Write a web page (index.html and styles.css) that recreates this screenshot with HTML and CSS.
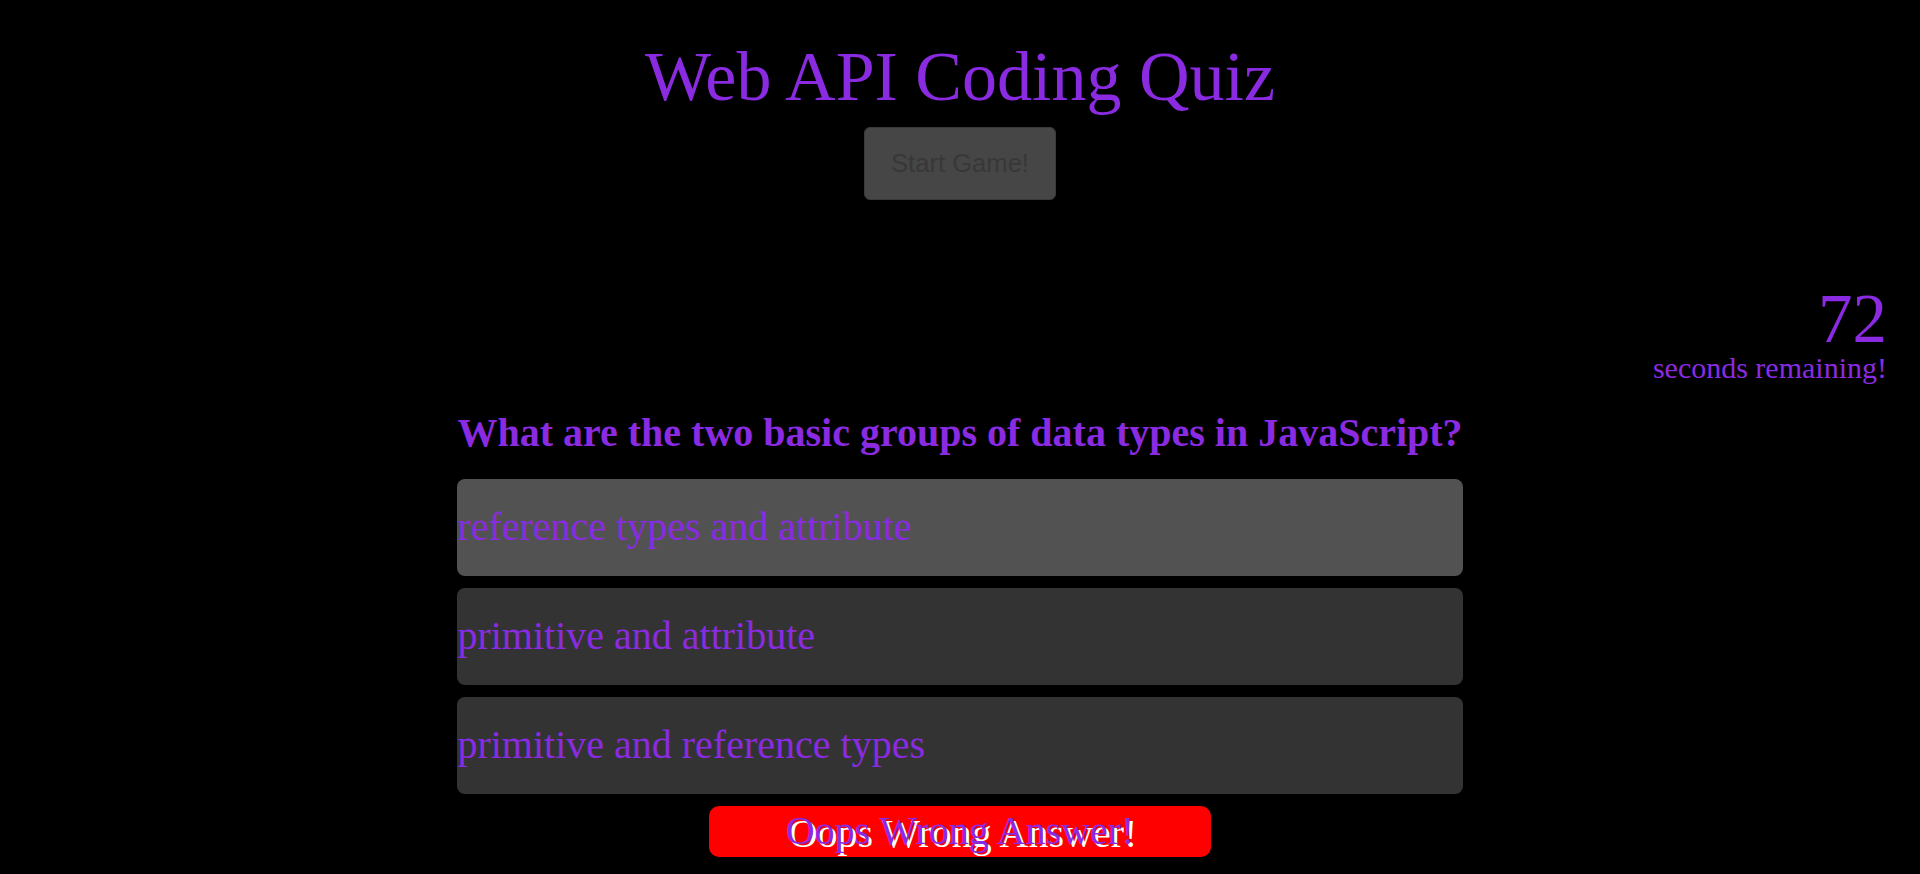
FILE: index.html
```html
<!DOCTYPE html>
<html lang="en">
<head>
<meta charset="UTF-8">
<title>Web API Coding Quiz</title>
<link rel="stylesheet" href="styles.css">
</head>
<body>
  <header class="header">
    <h1 class="title">Web API Coding Quiz</h1>
    <button class="start-btn" type="button" disabled>Start Game!</button>
  </header>
  <section class="timer">
    <div class="timer-count">72</div>
    <div class="timer-label">seconds remaining!</div>
  </section>
  <main class="quiz">
    <h2 class="question">What are the two basic groups of data types in JavaScript?</h2>
    <div class="answers">
      <div class="answer answer-hover">reference types and attribute</div>
      <div class="answer">primitive and attribute</div>
      <div class="answer">primitive and reference types</div>
    </div>
    <div class="feedback">Oops Wrong Answer!</div>
  </main>
</body>
</html>
```

FILE: styles.css
```css
html, body {
  margin: 0;
  padding: 0;
  background: #000000;
}

body {
  font-family: "Liberation Serif", "Times New Roman", serif;
  color: #8a2be2;
}

.header {
  display: flex;
  flex-direction: column;
  align-items: center;
}

.title {
  margin: 37px 0 0;
  font-size: 70px;
  line-height: 79px;
  font-weight: normal;
  color: #8a2be2;
  text-align: center;
}

.start-btn {
  margin-top: 11px;
  padding: 21px 26px;
  font-family: "Liberation Sans", Arial, sans-serif;
  font-size: 25.6px;
  line-height: 29px;
  color: #383838;
  background: #464646;
  border: 1px solid #3a3a3a;
  border-radius: 6px;
}

.timer {
  margin-top: 88px;
  padding-right: 33px;
  text-align: right;
}

.timer-count {
  font-size: 69px;
  line-height: 62px;
}

.timer-label {
  font-size: 30px;
  line-height: 35px;
}

.quiz {
  width: fit-content;
  margin: 25px auto 0;
}

.question {
  margin: 0;
  font-size: 40px;
  line-height: 46px;
  font-weight: bold;
  white-space: nowrap;
}

.answers {
  display: flex;
  flex-direction: column;
  gap: 12px;
  margin-top: 23px;
}

.answer {
  padding: 25px 0 26px;
  font-size: 40px;
  line-height: 46px;
  background: #333333;
  border-radius: 8px;
}

.answer-hover {
  background: #525252;
}

.feedback {
  width: 50%;
  margin: 12px auto 0;
  padding: 2px 0 3px;
  font-size: 40px;
  line-height: 46px;
  text-align: center;
  background: #ff0000;
  border-radius: 10px;
  color: #8a2be2;
  text-shadow: 3px 3px 0 #ffffff;
}
```
